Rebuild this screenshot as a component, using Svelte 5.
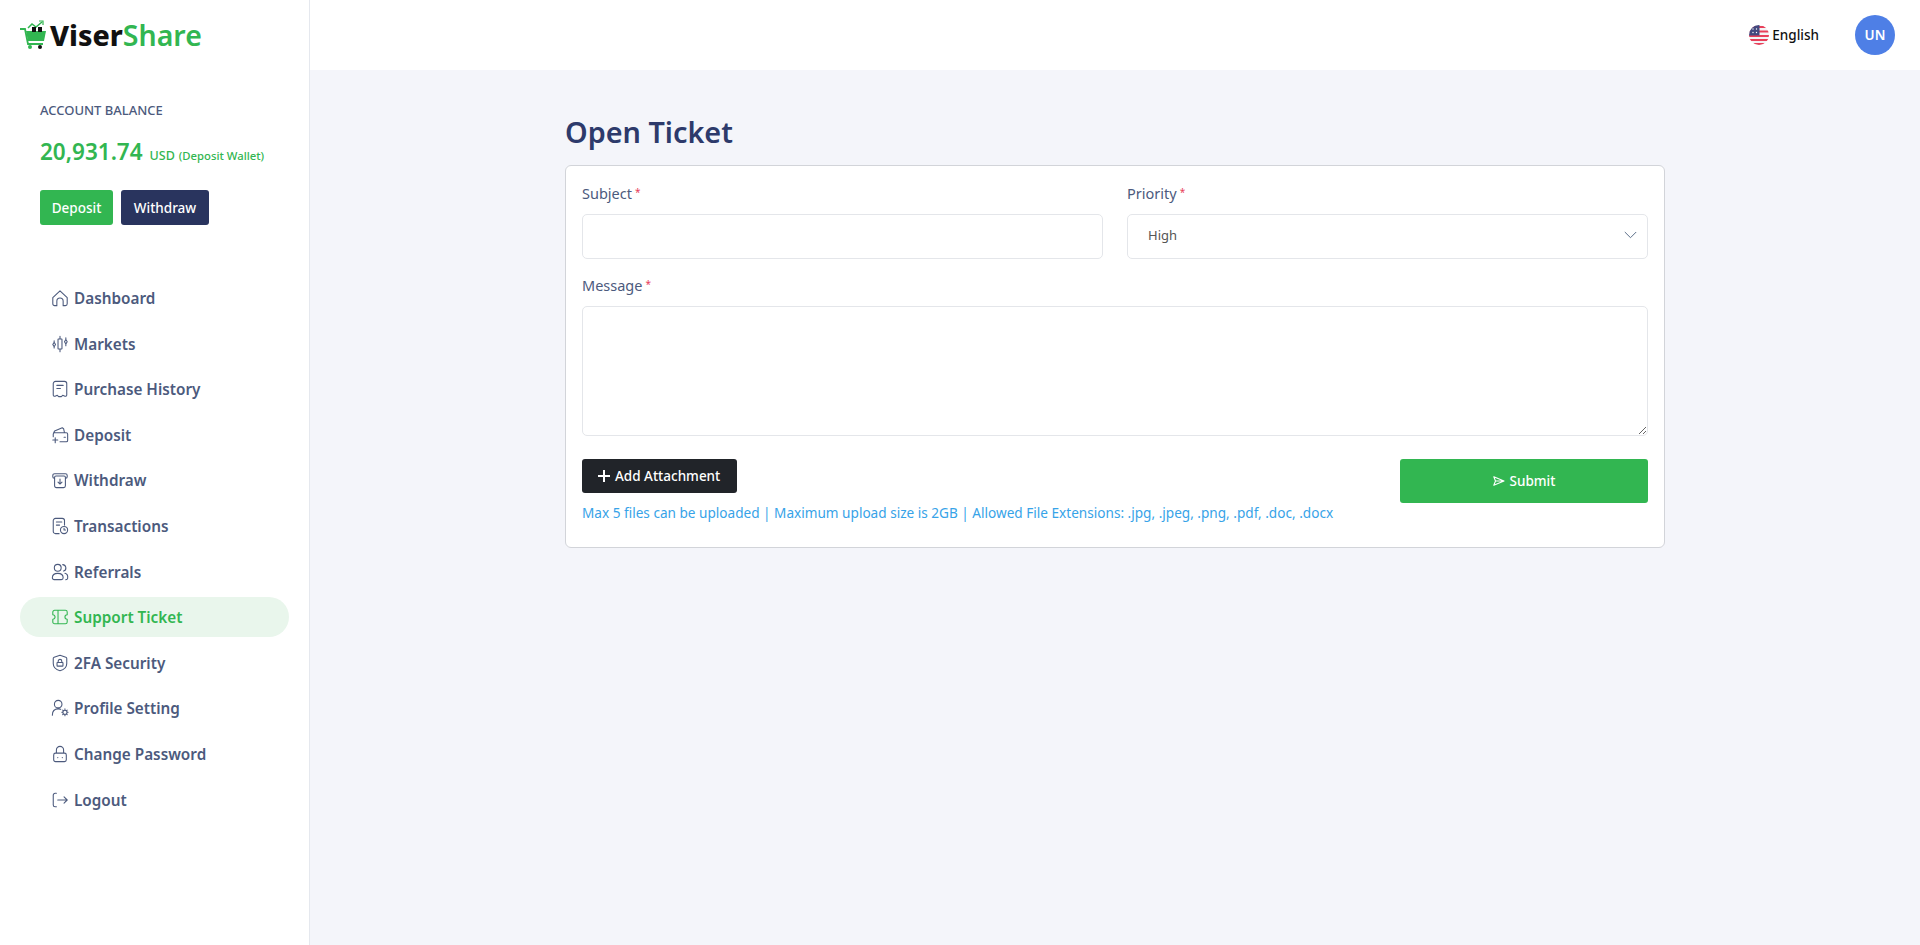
<script>
	const menu = [
		{ label: 'Dashboard', icon: 'home' },
		{ label: 'Markets', icon: 'markets' },
		{ label: 'Purchase History', icon: 'receipt' },
		{ label: 'Deposit', icon: 'wallet' },
		{ label: 'Withdraw', icon: 'withdraw' },
		{ label: 'Transactions', icon: 'transactions' },
		{ label: 'Referrals', icon: 'users' },
		{ label: 'Support Ticket', icon: 'ticket', active: true },
		{ label: '2FA Security', icon: 'shield' },
		{ label: 'Profile Setting', icon: 'profile' },
		{ label: 'Change Password', icon: 'lock' },
		{ label: 'Logout', icon: 'logout' }
	];

	const icons = {
		home: 'M2 9.500 10 2l8 7.500v7a2 2 0 0 1-2 2h-2.500v-5a3.500 3.500 0 0 0-7 0v5H4a2 2 0 0 1-2-2z',
		markets: 'M10 1.500v3M10 15.500v3M8.300 4.500h3.400a.5.5 0 0 1 .5.5v10a.5.5 0 0 1-.5.5H8.300a.5.5 0 0 1-.5-.5V5a.5.5 0 0 1 .5-.5zM3.500 6.500V8M3.500 13v1.500M3.500 8 5 10.500 3.500 13 2 10.500zM16.500 3v2M16.500 10v2M16.500 5 18 7.500 16.500 10 15 7.500z',
		receipt: 'M2.500 4a2.500 2.500 0 0 1 2.500-2.500h10A2.500 2.500 0 0 1 17.500 4v12.500a1.500 1.500 0 0 1-2 1.500l-2.500-1-1.500 1.500h-3L7 17l-2.500 1a1.500 1.500 0 0 1-2-1.500zM6.500 6h7M6.500 9.500h4',
		wallet: 'M2.500 12V9a1.500 1.500 0 0 1 1.500-1.500h13A1.500 1.500 0 0 1 18.500 9v7a1.500 1.500 0 0 1-1.500 1.500H10M3 7.500l1-2L12.500 2l1.500 1 1 4.500M2 15.500h5.500M4.700 13v5.500M14.500 12.500h1.500',
		withdraw: 'M4 8H3.500A1.500 1.500 0 0 1 2 6.500V5a2 2 0 0 1 2-2h12a2 2 0 0 1 2 2v1.500A1.500 1.500 0 0 1 16.500 8H16M5.500 5.500h9A1.500 1.500 0 0 1 16 7v9.500a2 2 0 0 1-2 2H6a2 2 0 0 1-2-2V7a1.500 1.500 0 0 1 1.500-1.500zM10 9v5.500M7.800 12.300 10 14.500l2.200-2.200',
		transactions: 'M9 18.500H5a2.500 2.500 0 0 1-2.500-2.500V4A2.500 2.500 0 0 1 5 1.500h7.500A2.500 2.500 0 0 1 15 4v5M6 5.500h6M6 9h3.500M14.500 10.500a4 4 0 1 0 0 8 4 4 0 0 0 0-8zM14.500 12.500v2h1.700',
		users: 'M7.500 1.500a3.800 3.800 0 1 0 0 7.600 3.800 3.800 0 0 0 0-7.600zM1.500 16.500c0-3.500 2.500-5 6-5s6 1.500 6 5a2 2 0 0 1-2 2h-8a2 2 0 0 1-2-2zM13 1.800a3.700 3.700 0 0 1 1 7.200M15.500 11.500c2 .5 3.500 2 3 5.500a2 2 0 0 1-2 1.500',
		ticket: 'M4 2.500h12a2 2 0 0 1 2 2V7.500a2.500 2.500 0 0 0 0 5v3a2 2 0 0 1-2 2H4a2 2 0 0 1-2-2v-3a2.500 2.500 0 0 0 0-5v-3a2 2 0 0 1 2-2zM7.800 2.500v15',
		shield: 'M10 1.500 16.500 3.500a1.500 1.500 0 0 1 1 1.500v5.500c0 4-3.500 7-7.500 8-4-1-7.500-4-7.500-8V5a1.500 1.500 0 0 1 1-1.500zM7.200 9.500h5.600a.5.5 0 0 1 .5.5v3a.5.5 0 0 1-.5.5H7.200a.5.5 0 0 1-.5-.5v-3a.5.5 0 0 1 .5-.5zM8 9.500V8a2 2 0 0 1 4 0v1.500',
		profile: 'M8 1.500a4.200 4.200 0 1 0 0 8.400 4.200 4.200 0 0 0 0-8.400zM1.500 18c0-4.500 2.500-7 6.500-7 1 0 2 .2 2.800.5M15.500 12.500a2.300 2.300 0 1 0 0 4.600 2.300 2.300 0 0 0 0-4.600zM15.500 11v1.500M15.500 17v1.500M12 14.800h1.200M17.800 14.800H19M13 12.300l.9.900M17.100 16.400l.9.900M18 12.300l-.9.900M13.900 16.400l-.9.900',
		lock: 'M5 9h10a2 2 0 0 1 2 2v5.500a2 2 0 0 1-2 2H5a2 2 0 0 1-2-2V11a2 2 0 0 1 2-2zM6 9V5.500a4 4 0 0 1 8 0V9M7.500 14h.1M12.500 14h.1',
		logout: 'M6 2.500H4.500A2 2 0 0 0 2.500 4.500v11a2 2 0 0 0 2 2H6M7.500 10h10.500M14.500 6.500 18 10l-3.500 3.500'
	};
</script>

<div class="layout">
	<aside class="sidebar">
		<div class="logo">
			<svg class="logo-cart" width="27" height="30" viewBox="0 0 27 30">
				<path d="M0 9h5l3 15h15" fill="none" stroke="#32b651" stroke-width="1.800" />
				<path d="M6 11h20l-2 10H8z" fill="#32b651" />
				<path d="M8 8l4-4 4 3 6-5" fill="none" stroke="#32b651" stroke-width="1.500" />
				<path d="M19 1h4v4" fill="none" stroke="#32b651" stroke-width="1.200" />
				<rect x="12" y="7" width="4" height="5" fill="#111" />
				<rect x="18" y="7" width="4" height="5" fill="#111" />
				<circle cx="10" cy="27" r="2" fill="#32b651" />
				<circle cx="20" cy="27" r="2" fill="#111" />
			</svg>
			<span class="logo-text"><b>Viser</b><em>Share</em></span>
		</div>

		<div class="balance">
			<div class="balance-label">ACCOUNT BALANCE</div>
			<div class="balance-amount">
				<strong>20,931.74</strong>
				<span class="usd">USD</span>
				<span class="wallet-name">(Deposit Wallet)</span>
			</div>
			<div class="balance-actions">
				<button class="btn deposit">Deposit</button>
				<button class="btn withdraw">Withdraw</button>
			</div>
		</div>

		<nav class="menu">
			{#each menu as item}
				<a href="#top" class="menu-item" class:active={item.active}>
					<svg width="18" height="18" viewBox="0 0 20 20" fill="none" stroke="currentColor" stroke-width="1.200" stroke-linecap="round" stroke-linejoin="round">
						<path d={icons[item.icon]} />
					</svg>
					<span>{item.label}</span>
				</a>
			{/each}
		</nav>
	</aside>

	<div class="main">
		<header class="topbar">
			<div class="lang">
				<svg width="20" height="20" viewBox="0 0 20 20">
					<defs>
						<clipPath id="flagClip"><circle cx="10" cy="10" r="10" /></clipPath>
					</defs>
					<g clip-path="url(#flagClip)">
						<rect width="20" height="20" fill="#f4f4f6" />
						<rect y="1" width="20" height="2" fill="#e8405a" />
						<rect y="5.500" width="20" height="2" fill="#e8405a" />
						<rect y="10" width="20" height="2" fill="#e8405a" />
						<rect y="14" width="20" height="2" fill="#e8405a" />
						<rect y="18" width="20" height="2" fill="#e8405a" />
						<rect width="10.500" height="10.500" fill="#43497f" />
						<circle cx="4" cy="4" r=".7" fill="#fff" />
						<circle cx="7.500" cy="4" r=".7" fill="#fff" />
						<circle cx="4" cy="7.500" r=".7" fill="#fff" />
						<circle cx="7.500" cy="7.500" r=".7" fill="#fff" />
					</g>
				</svg>
				<span>English</span>
			</div>
			<div class="avatar">UN</div>
		</header>

		<main class="content">
			<h1>Open Ticket</h1>
			<form class="card">
				<div class="row">
					<div class="field">
						<label for="subject">Subject<sup>*</sup></label>
						<input id="subject" type="text" />
					</div>
					<div class="field">
						<label for="priority">Priority<sup>*</sup></label>
						<div class="select" id="priority">
							<span>High</span>
							<svg width="13" height="8" viewBox="0 0 13 8" fill="none" stroke="#5b6e88" stroke-width="1">
								<path d="M.8 1l5.700 5.700L12.200 1" />
							</svg>
						</div>
					</div>
				</div>
				<div class="field message">
					<label for="message">Message<sup>*</sup></label>
					<textarea id="message"></textarea>
				</div>
				<div class="bottom">
					<div class="attach">
						<button type="button" class="add-btn"><i class="plus"></i>Add Attachment</button>
						<p class="hint">Max 5 files can be uploaded | Maximum upload size is 2GB | Allowed File Extensions: .jpg, .jpeg, .png, .pdf, .doc, .docx</p>
					</div>
					<button type="button" class="submit">
						<svg width="12" height="10" viewBox="0 0 12 10" fill="none" stroke="#fff" stroke-width="1.100" stroke-linejoin="round">
							<path d="M.8.8 11 5 .8 9.200 2.500 5zM2.500 5H11" />
						</svg>
						Submit
					</button>
				</div>
			</form>
		</main>
	</div>
</div>

<style>
	:global(body) {
		margin: 0;
		background: #f4f5fa;
		font-family: "Noto Sans", "Open Sans", sans-serif;
	}

	.layout {
		display: flex;
		min-height: 945px;
	}

	.sidebar {
		flex-shrink: 0;
		background: #fff;
		border-right: 1px solid #e5e8ee;
		box-sizing: content-box;
		width: 269px;
		padding: 0 20px;
	}

	.logo {
		display: flex;
		align-items: center;
		gap: 3px;
		height: 70px;
	}

	.logo-text {
		font-family: "Noto Sans", sans-serif;
		font-size: 28.500px;
		line-height: 1;
	}

	.logo-text b {
		font-weight: 800;
		color: #111;
	}

	.logo-text em {
		font-style: normal;
		font-weight: 600;
		color: #32b651;
	}

	.balance {
		padding: 30px 0 0 20px;
	}

	.balance-label {
		font-size: 13px;
		font-weight: 500;
		line-height: 20px;
		color: #4c5a7d;
	}

	.balance-amount {
		margin-top: 20px;
		display: flex;
		align-items: baseline;
		color: #32b651;
		line-height: 24px;
		white-space: nowrap;
	}

	.balance-amount strong {
		font-size: 22.500px;
		font-weight: 600;
		margin-right: 7px;
	}

	.usd {
		font-size: 12.500px;
		font-weight: 500;
		margin-right: 4px;
	}

	.wallet-name {
		font-size: 11.300px;
		font-weight: 500;
	}

	.balance-actions {
		display: flex;
		gap: 8px;
		margin-top: 22px;
	}

	.btn {
		height: 35px;
		border: 0;
		border-radius: 3px;
		color: #fff;
		font: 500 13.500px "Noto Sans", sans-serif;
		padding: 0;
	}

	.deposit {
		width: 73px;
		background: #32b651;
	}

	.withdraw {
		width: 88px;
		background: #29345e;
	}

	.menu {
		display: flex;
		flex-direction: column;
		margin-top: 53px;
	}

	.menu-item {
		display: flex;
		align-items: center;
		gap: 5px;
		height: 40px;
		margin-bottom: 5.600px;
		padding-left: 31px;
		border-radius: 20px;
		text-decoration: none;
		font-size: 15.300px;
		font-weight: 600;
		color: #4c5a7d;
	}

	.menu-item.active {
		background: #e9f6ec;
		color: #32b651;
	}

	.main {
		flex: 1;
		min-width: 0;
	}

	.topbar {
		display: flex;
		align-items: center;
		justify-content: flex-end;
		height: 70px;
		background: #fff;
		padding-right: 25px;
	}

	.lang {
		display: flex;
		align-items: center;
		gap: 3px;
		margin-right: 36px;
		font-size: 13.500px;
		font-weight: 500;
		color: #111;
	}

	.avatar {
		width: 40px;
		height: 40px;
		border-radius: 50%;
		background: #4e7fe6;
		color: #fff;
		font-size: 13.500px;
		font-weight: 600;
		display: flex;
		align-items: center;
		justify-content: center;
	}

	.content {
		width: 1100px;
		margin: 0 auto;
		padding-top: 42px;
	}

	h1 {
		margin: 0 0 14px;
		font-size: 28.800px;
		font-weight: 600;
		line-height: 39px;
		color: #2d3a6b;
	}

	.card {
		display: block;
		box-sizing: border-box;
		height: 383px;
		background: #fff;
		border: 1px solid #d2d4d9;
		border-radius: 6px;
		padding: 16px;
	}

	.row {
		display: flex;
		gap: 24px;
	}

	.field {
		flex: 1;
		min-width: 0;
	}

	label {
		display: block;
		height: 32px;
		font-size: 14.500px;
		line-height: 22px;
		color: #4c5a7d;
	}

	sup {
		color: #e8405a;
		font-size: 10px;
		line-height: 0;
		margin-left: 3px;
		vertical-align: 3px;
	}

	input,
	.select,
	textarea {
		display: block;
		width: 100%;
		box-sizing: border-box;
		background: #fff;
		border: 1px solid #e4e6ea;
		border-radius: 5px;
		outline: none;
		margin: 0;
	}

	input,
	.select {
		height: 45px;
	}

	.select {
		display: flex;
		align-items: center;
		justify-content: space-between;
		padding: 0 10px 4px 20px;
		font-size: 13px;
		color: #555;
	}

	.message {
		margin-top: 15px;
	}

	textarea {
		height: 130px;
		resize: vertical;
	}

	.bottom {
		display: flex;
		justify-content: space-between;
		align-items: flex-start;
		margin-top: 23px;
	}

	.add-btn {
		display: flex;
		align-items: center;
		gap: 5px;
		height: 34px;
		width: 155px;
		padding: 0 0 0 16px;
		border: 0;
		border-radius: 3px;
		background: #212429;
		color: #fff;
		font: 500 13.500px "Noto Sans", sans-serif;
	}

	.plus {
		display: block;
		width: 12px;
		height: 12px;
		background:
			linear-gradient(#fff, #fff) center / 100% 2px no-repeat,
			linear-gradient(#fff, #fff) center / 2px 100% no-repeat;
	}

	.hint {
		margin: 10px 0 0;
		font-size: 13.600px;
		line-height: 20px;
		color: #37a3e8;
		white-space: nowrap;
	}

	.submit {
		display: flex;
		align-items: center;
		justify-content: center;
		gap: 5px;
		width: 248px;
		height: 44px;
		border: 0;
		border-radius: 3px;
		background: #32b651;
		color: #fff;
		font: 500 13.500px "Noto Sans", sans-serif;
	}
</style>
